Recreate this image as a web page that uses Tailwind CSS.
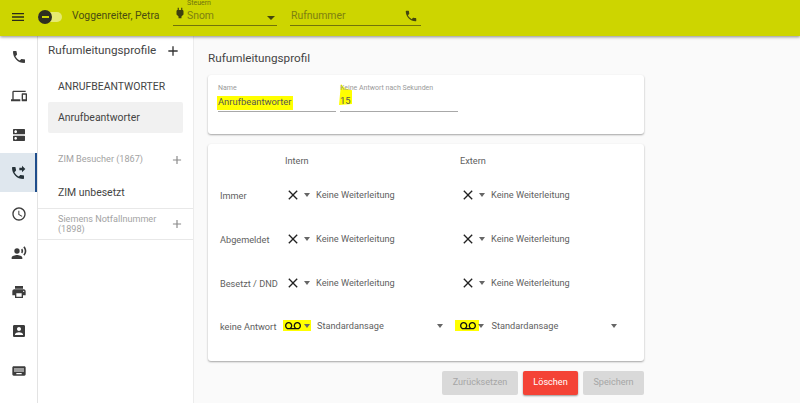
<!DOCTYPE html>
<html lang="de">
<head>
    <meta charset="UTF-8">
    <title>Rufumleitungsprofil</title>
    <script src="https://cdn.jsdelivr.net/npm/@tailwindcss/browser@4"></script>
</head>
<body class="h-[403px] w-[800px] overflow-hidden bg-[#fafafa] font-['Roboto',sans-serif] text-[#424242]">
    <header class="relative z-10 flex h-[36px] items-start bg-[#cdd500] shadow-[0_1px_3px_rgba(0,0,0,0.45)]">
        <svg class="ml-[10px] mt-[9px] h-[16px] w-[16px] fill-[#2b2b1a]" viewBox="0 0 24 24"><path d="M3 18h18v-2H3v2zm0-5h18v-2H3v2zm0-7v2h18V6H3z"/></svg>
        <div class="relative ml-[12px] mt-[12px] h-[10px] w-[24px] rounded-full bg-[#e6ea70]">
            <div class="absolute left-0 top-[-2px] flex h-[14px] w-[14px] items-center justify-center rounded-full bg-[#2e2e20]">
                <div class="h-[2px] w-[7px] bg-[#cdd500]"></div>
            </div>
        </div>
        <span class="ml-[10px] mt-[9px] w-[88px] whitespace-nowrap text-[10.4px] leading-[14px] text-[#4a4d10]">Voggenreiter, Petra</span>
        <div class="relative ml-[13px] mt-[2px] flex h-[24px] w-[104px] items-end border-b border-[#70730a] pb-[2px]">
            <span class="absolute left-[14px] top-[-3px] text-[7px] leading-[9px] text-[#6f7210]">Steuern</span>
            <svg class="absolute left-[0px] top-[4px] h-[14px] w-[14px] fill-[#3d3f10]" viewBox="0 0 24 24"><path d="M16 7V3h-2v4h-4V3H8v4H7.99C7 7 6 8 6 9v5.49L9.5 18v3h5v-3l3.5-3.5V9c0-1-1-2-2-2z"/></svg>
            <span class="ml-[14px] text-[10.4px] leading-[14px] text-[#7d8010]">Snom</span>
            <div class="absolute right-[2px] top-[14px] h-0 w-0 border-x-[4px] border-t-[4px] border-x-transparent border-t-[#44460f]"></div>
        </div>
        <div class="relative ml-[13px] mt-[2px] flex h-[24px] w-[131px] items-end border-b border-[#70730a] pb-[2px] pl-[1px]">
            <span class="text-[10.4px] leading-[14px] text-[#7d8010]">Rufnummer</span>
            <svg class="absolute right-[3px] top-[7px] h-[14px] w-[14px] fill-[#44460f]" viewBox="0 0 24 24"><path d="M6.62 10.79c1.44 2.83 3.76 5.14 6.59 6.59l2.2-2.2c.27-.27.67-.36 1.02-.24 1.12.37 2.33.57 3.57.57.55 0 1 .45 1 1V20c0 .55-.45 1-1 1-9.39 0-17-7.61-17-17 0-.55.45-1 1-1h3.5c.55 0 1 .45 1 1 0 1.25.2 2.45.57 3.57.11.35.03.74-.25 1.02l-2.2 2.2z"/></svg>
        </div>
    </header>

    <div class="flex h-[367px]">
        <nav class="flex w-[38px] flex-col items-stretch border-r border-[#e3e3e3] bg-white pt-[1px]">
            <div class="flex h-[39px] items-center justify-center">
                <svg class="h-[16px] w-[16px] fill-[#3c3c3c]" viewBox="0 0 24 24"><path d="M6.62 10.79c1.44 2.83 3.76 5.14 6.59 6.59l2.2-2.2c.27-.27.67-.36 1.02-.24 1.12.37 2.33.57 3.57.57.55 0 1 .45 1 1V20c0 .55-.45 1-1 1-9.39 0-17-7.61-17-17 0-.55.45-1 1-1h3.5c.55 0 1 .45 1 1 0 1.25.2 2.45.57 3.57.11.35.03.74-.25 1.02l-2.2 2.2z"/></svg>
            </div>
            <div class="flex h-[39px] items-center justify-center">
                <svg class="h-[16px] w-[16px] fill-[#3c3c3c]" viewBox="0 0 24 24"><path d="M4 6h18V4H4c-1.1 0-2 .9-2 2v11H0v3h14v-3H4V6zm19 2h-6c-.55 0-1 .45-1 1v10c0 .55.45 1 1 1h6c.55 0 1-.45 1-1V9c0-.55-.45-1-1-1zm-1 9h-4v-7h4v7z"/></svg>
            </div>
            <div class="flex h-[39px] items-center justify-center">
                <svg class="h-[16px] w-[16px] fill-[#3c3c3c]" viewBox="0 0 24 24"><path d="M20 13H4c-.55 0-1 .45-1 1v6c0 .55.45 1 1 1h16c.55 0 1-.45 1-1v-6c0-.55-.45-1-1-1zM7 19c-1.1 0-2-.9-2-2s.9-2 2-2 2 .9 2 2-.9 2-2 2zM20 3H4c-.55 0-1 .45-1 1v6c0 .55.45 1 1 1h16c.55 0 1-.45 1-1V4c0-.55-.45-1-1-1zM7 9c-1.1 0-2-.9-2-2s.9-2 2-2 2 .9 2 2-.9 2-2 2z"/></svg>
            </div>
            <div class="mt-[-1px] flex h-[39px] items-center justify-center border-r-2 border-[#1f4e8c] bg-[#dfe7ee]">
                <svg class="h-[16px] w-[16px] fill-[#263238]" viewBox="0 0 24 24"><path d="M18 11l5-5-5-5v3h-4v4h4v3zm2 4.5c-1.25 0-2.45-.2-3.57-.57-.35-.11-.74-.03-1.02.24l-2.2 2.2c-2.83-1.44-5.15-3.75-6.59-6.59l2.2-2.21c.28-.26.36-.65.25-1C8.7 6.45 8.5 5.25 8.5 4c0-.55-.45-1-1-1H4c-.55 0-1 .45-1 1 0 9.39 7.61 17 17 17 .55 0 1-.45 1-1v-3.5c0-.55-.45-1-1-1z"/></svg>
            </div>
            <div class="mt-[2px] flex h-[39.25px] items-center justify-center">
                <svg class="h-[16px] w-[16px] fill-[#3c3c3c]" viewBox="0 0 24 24"><path d="M11.99 2C6.47 2 2 6.48 2 12s4.47 10 9.99 10C17.52 22 22 17.52 22 12S17.52 2 11.99 2zM12 20c-4.42 0-8-3.58-8-8s3.58-8 8-8 8 3.58 8 8-3.58 8-8 8zm.5-13H11v6l5.25 3.15.75-1.23-4.5-2.67z"/></svg>
            </div>
            <div class="flex h-[39.25px] items-center justify-center">
                <svg class="h-[16px] w-[16px] fill-[#3c3c3c]" viewBox="0 0 24 24"><circle cx="9" cy="9" r="4"/><path d="M9 15c-2.67 0-8 1.34-8 4v2h16v-2c0-2.66-5.33-4-8-4zm7.76-9.64l-1.68 1.69c.84 1.18.84 2.71 0 3.89l1.68 1.69c2.02-2.02 2.02-5.07 0-7.27zM20.07 2l-1.63 1.63c2.77 3.02 2.77 7.56 0 10.74L20.07 16c3.9-3.89 3.91-9.95 0-14z"/></svg>
            </div>
            <div class="flex h-[39.25px] items-center justify-center">
                <svg class="h-[16px] w-[16px] fill-[#3c3c3c]" viewBox="0 0 24 24"><path d="M19 8H5c-1.66 0-3 1.34-3 3v6h4v4h12v-4h4v-6c0-1.66-1.34-3-3-3zm-3 11H8v-5h8v5zm3-7c-.55 0-1-.45-1-1s.45-1 1-1 1 .45 1 1-.45 1-1 1zm-1-9H6v4h12V3z"/></svg>
            </div>
            <div class="flex h-[39.25px] items-center justify-center">
                <svg class="h-[16px] w-[16px] fill-[#3c3c3c]" viewBox="0 0 24 24"><path d="M3 5v14c0 1.1.89 2 2 2h14c1.1 0 2-.9 2-2V5c0-1.1-.9-2-2-2H5c-1.11 0-2 .9-2 2zm12 4c0 1.66-1.34 3-3 3s-3-1.34-3-3 1.34-3 3-3 3 1.34 3 3zm-9 8c0-2 4-3.1 6-3.1s6 1.1 6 3.1v1H6v-1z"/></svg>
            </div>
            <div class="flex h-[39.25px] items-center justify-center">
                <svg class="h-[16px] w-[16px] fill-[#3c3c3c]" viewBox="0 0 24 24"><path d="M20 5H4c-1.1 0-1.99.9-1.99 2L2 17c0 1.1.9 2 2 2h16c1.1 0 2-.9 2-2V7c0-1.1-.9-2-2-2zm-9 3h2v2h-2V8zm0 3h2v2h-2v-2zM8 8h2v2H8V8zm0 3h2v2H8v-2zm-1 2H5v-2h2v2zm0-3H5V8h2v2zm9 7H8v-2h8v2zm0-4h-2v-2h2v2zm0-3h-2V8h2v2zm3 3h-2v-2h2v2zm0-3h-2V8h2v2z"/></svg>
            </div>
        </nav>

        <aside class="w-[156px] border-r border-[#ececec] bg-white">
            <div class="flex h-[30px] items-center pl-[10px]">
                <span class="text-[11.7px] text-[#444]">Rufumleitungsprofile</span>
                <svg class="ml-[9px] h-[16px] w-[16px] fill-[#333]" viewBox="0 0 24 24"><path d="M19 13h-6v6h-2v-6H5v-2h6V5h2v6h6v2z"/></svg>
            </div>
            <div class="flex h-[36px] items-center pl-[20px] pt-[6px] text-[10.45px] text-[#444]">ANRUFBEANTWORTER</div>
            <div class="mx-[10px] flex h-[31px] items-center rounded-[2px] bg-[#f1f1f1] pl-[10px] pt-[1px] text-[10.45px] text-[#444]">Anrufbeantworter</div>
            <div class="mt-[11px] flex h-[32px] items-center justify-between pl-[20px] pr-[9px] text-[9.1px] text-[#a3a3a3]">
                <span>ZIM Besucher (1867)</span>
                <svg class="h-[14px] w-[14px] fill-[#8a8a8a]" viewBox="0 0 24 24"><path d="M19 13h-6v6h-2v-6H5v-2h6V5h2v6h6v2z"/></svg>
            </div>
            <div class="flex h-[33px] items-center border-b border-[#e8e8e8] pl-[20px] pt-[1px] text-[10.45px] text-[#444]">ZIM unbesetzt</div>
            <div class="flex h-[31px] items-center justify-between border-b border-[#e8e8e8] pl-[20px] pr-[9px] text-[9.1px] leading-[10.5px] text-[#a3a3a3]">
                <span>Siemens Notfallnummer<br>(1898)</span>
                <svg class="h-[14px] w-[14px] fill-[#8a8a8a]" viewBox="0 0 24 24"><path d="M19 13h-6v6h-2v-6H5v-2h6V5h2v6h6v2z"/></svg>
            </div>
        </aside>

        <main class="w-[606px] px-[14px]">
            <h1 class="flex h-[39px] items-center pt-[6px] text-[11.7px] font-normal text-[#444]">Rufumleitungsprofil</h1>
            <section class="flex h-[59px] w-[436px] gap-[4px] rounded-[3px] bg-white px-[10px] pt-[9px] shadow-[0_1px_2px_rgba(0,0,0,0.35)]">
                <div class="w-[118px]">
                    <div class="text-[7px] leading-[9px] text-[#9a9a9a]">Name</div>
                    <div class="h-[19px] border-b border-[#a8a8a8] text-[9.4px] leading-[18px]"><span class="ml-[-1px] inline-block h-[14px] bg-[#ffff00] px-[1px] leading-[12px] text-[#555]">Anrufbeantworter</span></div>
                </div>
                <div class="relative w-[118px]">
                    <div class="absolute left-[-1px] top-[0px] h-[21px] w-[13px] bg-[#ffff00] [clip-path:polygon(15%_0,45%_20%,100%_30%,100%_95%,0_100%)]"></div>
                    <div class="relative text-[7px] leading-[9px] text-[#9a9a9a]">Keine Antwort nach Sekunden</div>
                    <div class="relative h-[19px] border-b border-[#a8a8a8] text-[9.4px] leading-[16px] text-[#555]">15</div>
                </div>
            </section>

            <section class="mt-[10px] h-[217px] w-[436px] rounded-[3px] bg-white shadow-[0_1px_2px_rgba(0,0,0,0.35)]">
                <div class="grid grid-cols-[65px_175px_175px] pl-[12px] pt-[10px] text-[#616161]">
                    <div></div>
                    <div class="text-[9.2px] leading-[14px]">Intern</div>
                    <div class="text-[9.2px] leading-[14px]">Extern</div>
                </div>
                <div class="grid grid-cols-[65px_175px_175px] grid-rows-[44px_44px_43px_44px] items-center pl-[12px] pt-[5px] text-[9.2px] text-[#616161]">
                    <div class="mt-[2px] whitespace-nowrap">Immer</div>
                    <div class="flex items-center">
                        <svg class="h-[16px] w-[16px] fill-[#222]" viewBox="0 0 24 24"><path d="M19 6.41L17.59 5 12 10.59 6.41 5 5 6.41 10.59 12 5 17.59 6.41 19 12 13.41 17.59 19 19 17.59 13.41 12z"/></svg>
                        <div class="ml-[2.5px] h-0 w-0 border-x-[3.5px] border-t-[4px] border-x-transparent border-t-[#666]"></div>
                        <span class="ml-[6.5px]">Keine Weiterleitung</span>
                    </div>
                    <div class="flex items-center">
                        <svg class="h-[16px] w-[16px] fill-[#222]" viewBox="0 0 24 24"><path d="M19 6.41L17.59 5 12 10.59 6.41 5 5 6.41 10.59 12 5 17.59 6.41 19 12 13.41 17.59 19 19 17.59 13.41 12z"/></svg>
                        <div class="ml-[2.5px] h-0 w-0 border-x-[3.5px] border-t-[4px] border-x-transparent border-t-[#666]"></div>
                        <span class="ml-[6.5px]">Keine Weiterleitung</span>
                    </div>

                    <div class="mt-[2px] whitespace-nowrap">Abgemeldet</div>
                    <div class="flex items-center">
                        <svg class="h-[16px] w-[16px] fill-[#222]" viewBox="0 0 24 24"><path d="M19 6.41L17.59 5 12 10.59 6.41 5 5 6.41 10.59 12 5 17.59 6.41 19 12 13.41 17.59 19 19 17.59 13.41 12z"/></svg>
                        <div class="ml-[2.5px] h-0 w-0 border-x-[3.5px] border-t-[4px] border-x-transparent border-t-[#666]"></div>
                        <span class="ml-[6.5px]">Keine Weiterleitung</span>
                    </div>
                    <div class="flex items-center">
                        <svg class="h-[16px] w-[16px] fill-[#222]" viewBox="0 0 24 24"><path d="M19 6.41L17.59 5 12 10.59 6.41 5 5 6.41 10.59 12 5 17.59 6.41 19 12 13.41 17.59 19 19 17.59 13.41 12z"/></svg>
                        <div class="ml-[2.5px] h-0 w-0 border-x-[3.5px] border-t-[4px] border-x-transparent border-t-[#666]"></div>
                        <span class="ml-[6.5px]">Keine Weiterleitung</span>
                    </div>

                    <div class="mt-[2px] whitespace-nowrap">Besetzt / DND</div>
                    <div class="flex items-center">
                        <svg class="h-[16px] w-[16px] fill-[#222]" viewBox="0 0 24 24"><path d="M19 6.41L17.59 5 12 10.59 6.41 5 5 6.41 10.59 12 5 17.59 6.41 19 12 13.41 17.59 19 19 17.59 13.41 12z"/></svg>
                        <div class="ml-[2.5px] h-0 w-0 border-x-[3.5px] border-t-[4px] border-x-transparent border-t-[#666]"></div>
                        <span class="ml-[6.5px]">Keine Weiterleitung</span>
                    </div>
                    <div class="flex items-center">
                        <svg class="h-[16px] w-[16px] fill-[#222]" viewBox="0 0 24 24"><path d="M19 6.41L17.59 5 12 10.59 6.41 5 5 6.41 10.59 12 5 17.59 6.41 19 12 13.41 17.59 19 19 17.59 13.41 12z"/></svg>
                        <div class="ml-[2.5px] h-0 w-0 border-x-[3.5px] border-t-[4px] border-x-transparent border-t-[#666]"></div>
                        <span class="ml-[6.5px]">Keine Weiterleitung</span>
                    </div>

                    <div class="mt-[2px] whitespace-nowrap">keine Antwort</div>
                    <div class="ml-[-2px] flex items-center">
                        <div class="flex h-[11px] items-center bg-[#ffff00] pl-[2px] pr-[1.5px]">
                            <svg class="h-[16px] w-[16px] fill-[#111]" viewBox="0 0 24 24"><path d="M18.5 6C15.46 6 13 8.46 13 11.5c0 1.33.47 2.55 1.26 3.5H9.74c.79-.95 1.26-2.17 1.26-3.5C11 8.46 8.54 6 5.5 6S0 8.46 0 11.5 2.46 17 5.5 17h13c3.04 0 5.5-2.46 5.5-5.5S21.54 6 18.5 6zm-13 9C3.57 15 2 13.43 2 11.5S3.57 8 5.5 8 9 9.57 9 11.5 7.43 15 5.5 15zm13 0c-1.93 0-3.5-1.57-3.5-3.5S16.57 8 18.5 8 22 9.57 22 11.5 20.43 15 18.5 15z"/></svg>
                            <div class="ml-[2.5px] h-0 w-0 border-x-[3.5px] border-t-[4px] border-x-transparent border-t-[#666]"></div>
                        </div>
                        <span class="ml-[6px]">Standardansage</span>
                        <div class="ml-[53px] h-0 w-0 border-x-[3.5px] border-t-[4px] border-x-transparent border-t-[#666]"></div>
                    </div>
                    <div class="ml-[-5px] flex items-center">
                        <div class="flex h-[11px] items-center bg-[#ffff00] pl-[4.5px] pr-[3.5px]">
                            <svg class="h-[16px] w-[16px] fill-[#111]" viewBox="0 0 24 24"><path d="M18.5 6C15.46 6 13 8.46 13 11.5c0 1.33.47 2.55 1.26 3.5H9.74c.79-.95 1.26-2.17 1.26-3.5C11 8.46 8.54 6 5.5 6S0 8.46 0 11.5 2.46 17 5.5 17h13c3.04 0 5.5-2.46 5.5-5.5S21.54 6 18.5 6zm-13 9C3.57 15 2 13.43 2 11.5S3.57 8 5.5 8 9 9.57 9 11.5 7.43 15 5.5 15zm13 0c-1.93 0-3.5-1.57-3.5-3.5S16.57 8 18.5 8 22 9.57 22 11.5 20.43 15 18.5 15z"/></svg>
                        </div>
                        <div class="ml-[-1.5px] h-0 w-0 border-x-[3.5px] border-t-[4px] border-x-transparent border-t-[#666]"></div>
                        <span class="ml-[8px]">Standardansage</span>
                        <div class="ml-[53px] h-0 w-0 border-x-[3.5px] border-t-[4px] border-x-transparent border-t-[#666]"></div>
                    </div>
                </div>
            </section>

            <div class="mt-[10px] flex w-[436px] justify-end gap-[5px] text-[9.1px]">
                <button class="h-[24px] w-[76px] rounded-[2px] bg-[#d9d9d9] text-[#a6a6a6]">Zurücksetzen</button>
                <button class="h-[24px] w-[55px] rounded-[2px] bg-[#f44336] text-white shadow-[0_1px_2px_rgba(0,0,0,0.4)]">Löschen</button>
                <button class="h-[24px] w-[61px] rounded-[2px] bg-[#d9d9d9] text-[#a6a6a6]">Speichern</button>
            </div>
        </main>
    </div>
</body>
</html>
